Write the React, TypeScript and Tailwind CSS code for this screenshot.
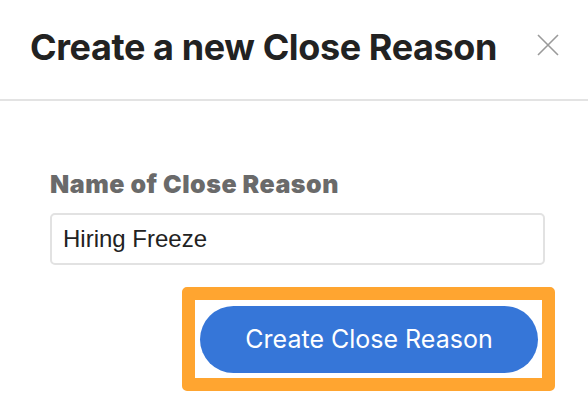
import { useState } from "react";

export default function App() {
  const [name, setName] = useState("Hiring Freeze");

  return (
    <div className="w-[588px] h-[418px] bg-white overflow-hidden" style={{ fontFamily: "Inter, 'Noto Sans', sans-serif" }}>
      {/* header */}
      <div className="flex items-start justify-between pl-[30px] pr-[28px] pt-[24px] h-[101px] border-b-2 border-[#e3e3e3]">
        <h1 className="text-[36px] leading-[46px] font-bold text-[#222222] tracking-[-0.4px]">
          Create a new Close Reason
        </h1>
        <button className="mt-[9px] w-[24px] h-[24px] flex items-center justify-center" aria-label="Close">
          <svg width="22" height="22" viewBox="0 0 22 22" fill="none" stroke="#9a9a9a" strokeWidth="1.6">
            <path d="M1 1 L21 21 M21 1 L1 21" />
          </svg>
        </button>
      </div>

      {/* body */}
      <div className="pl-[50px] pr-[43px] pt-[67px] flex flex-col">
        <label className="text-[25px] leading-[32px] font-black text-[#6a6a6a] tracking-[0.5px]">
          Name of Close Reason
        </label>
        <input
          value={name}
          onChange={(e) => setName(e.target.value)}
          className="mt-[13px] h-[52px] w-full border-2 border-[#e2e2e2] rounded-[5px] px-[11px] text-[24px] text-[#222222] outline-none"
          style={{ fontFamily: "'Liberation Sans', Arial, sans-serif" }}
        />
        <div className="flex justify-end mt-[22px] -mr-[10px]">
          <div className="border-[13px] border-[#ffa530] rounded-[5px] pt-[6px] pb-[5px] pl-[5px] pr-[4px]">
            <button className="w-[338px] h-[67px] rounded-full bg-[#3676d8] text-white text-[25px] font-normal">
              Create Close Reason
            </button>
          </div>
        </div>
      </div>
    </div>
  );
}
